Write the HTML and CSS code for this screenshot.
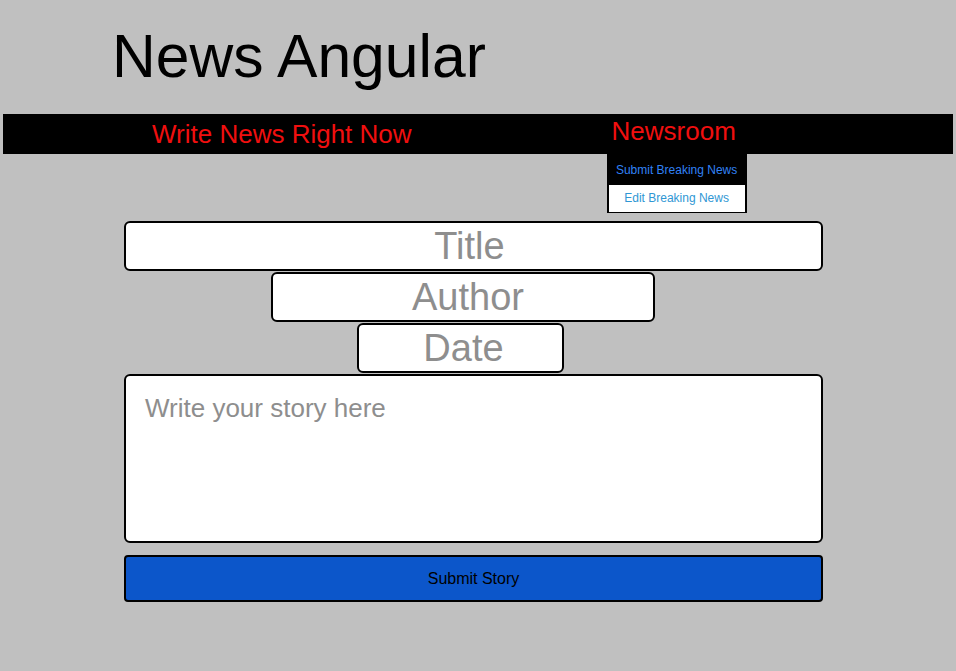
FILE: index.html
```html
<!DOCTYPE html>
<html lang="en">
<head>
<meta charset="utf-8">
<title>News Angular</title>
<link rel="stylesheet" href="styles.css">
</head>
<body>
  <header class="site-header">
    <h1 class="site-title">News Angular</h1>
  </header>
  <nav class="navbar">
    <a class="nav-link nav-write" href="#">Write News Right Now</a>
    <div class="nav-menu">
      <a class="nav-link nav-newsroom" href="#">Newsroom</a>
      <ul class="dropdown">
        <li class="dropdown-item dropdown-submit"><a href="#">Submit Breaking News</a></li>
        <li class="dropdown-item dropdown-edit"><a href="#">Edit Breaking News</a></li>
      </ul>
    </div>
  </nav>
  <main class="story-form-wrap">
    <form class="story-form">
      <input class="field field-title" type="text" placeholder="Title">
      <input class="field field-author" type="text" placeholder="Author">
      <input class="field field-date" type="text" placeholder="Date">
      <textarea class="story-body" placeholder="Write your story here"></textarea>
      <button class="submit-btn" type="button">Submit Story</button>
    </form>
  </main>
</body>
</html>
```
FILE: styles.css
```css
html, body {
  margin: 0;
  padding: 0;
}

body {
  background: #c0c0c0;
  font-family: "Liberation Sans", Arial, sans-serif;
  padding: 0 3px;
  min-height: 671px;
  box-sizing: border-box;
}

.site-title {
  margin: 22px 0 23px 109px;
  font-size: 60.6px;
  font-weight: normal;
  line-height: 69px;
  color: #000;
}

.navbar {
  display: flex;
  align-items: flex-start;
  height: 40px;
  background: #000;
}

.nav-link {
  color: #f00f0f;
  text-decoration: none;
  font-size: 26px;
  line-height: 30px;
  display: block;
}

.nav-write {
  margin-left: 149px;
  padding-top: 5px;
}

.nav-menu {
  position: relative;
  margin-left: 195px;
}

.nav-newsroom {
  padding: 2px 5px 0 5px;
}

.dropdown {
  position: absolute;
  top: 40px;
  left: 0;
  width: 136px;
  margin: 0;
  padding: 0;
  list-style: none;
  background: #000;
  border: 2px solid #000;
  border-top: 0;
  border-bottom-width: 1px;
}

.dropdown-item {
  text-align: center;
  font-size: 12px;
}

.dropdown-item a {
  text-decoration: none;
  display: block;
}

.dropdown-submit {
  height: 31px;
}

.dropdown-submit a {
  color: #3182f6;
  line-height: 31px;
  padding-top: 1px;
  height: 30px;
  box-sizing: border-box;
}

.dropdown-edit {
  background: #fff;
}

.dropdown-edit a {
  color: #2f97d4;
  line-height: 27px;
}

.story-form-wrap {
  margin-top: 67px;
  padding-left: 121px;
}

.story-form {
  display: flex;
  flex-direction: column;
  align-items: flex-start;
  width: 699px;
}

.field {
  box-sizing: border-box;
  height: 50px;
  margin: 0 0 1px 0;
  padding: 0 4px;
  border: 2px solid #000;
  border-radius: 6px;
  background: #fff;
  font-family: "Liberation Sans", Arial, sans-serif;
  font-size: 38px;
  text-align: center;
  color: #000;
  outline: none;
}

.field::placeholder,
.story-body::placeholder {
  color: #8e8e8e;
  opacity: 1;
}

.field-title {
  width: 699px;
  padding-right: 12px;
}

.field-author {
  width: 384px;
  margin-left: 147px;
  padding-left: 14px;
}

.field-date {
  width: 207px;
  margin-left: 233px;
  padding-left: 10px;
}

.story-body {
  box-sizing: border-box;
  width: 699px;
  height: 169px;
  margin: 0;
  padding: 17px 19px;
  border: 2px solid #000;
  border-radius: 6px;
  background: #fff;
  font-family: "Liberation Sans", Arial, sans-serif;
  font-size: 26px;
  resize: none;
  outline: none;
}

.submit-btn {
  box-sizing: border-box;
  width: 699px;
  height: 47px;
  margin-top: 12px;
  border: 2px solid #000;
  border-radius: 4px;
  background: #0c56ca;
  color: #000;
  font-family: "Liberation Sans", Arial, sans-serif;
  font-size: 16px;
  cursor: pointer;
}
```
